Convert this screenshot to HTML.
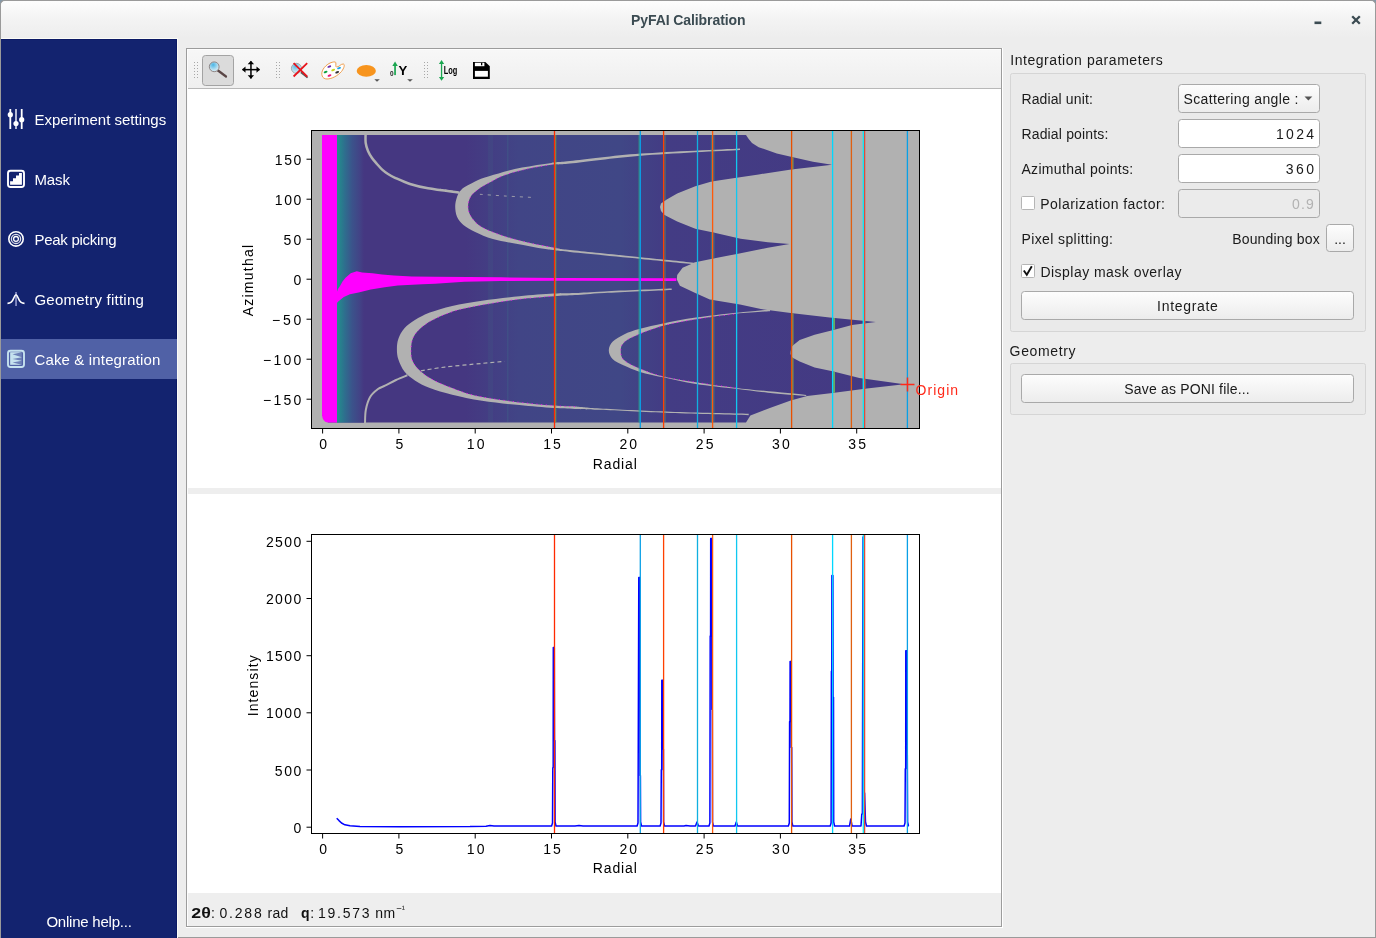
<!DOCTYPE html>
<html><head><meta charset="utf-8">
<style>
*{margin:0;padding:0}
html,body{width:1376px;height:938px;overflow:hidden;background:#8598a8}
svg{position:absolute;left:0;top:0;display:block;will-change:transform}
</style></head><body>
<svg width="1376" height="938" viewBox="0 0 1376 938">
<defs>
 <linearGradient id="titleg" x1="0" y1="0" x2="0" y2="1"><stop offset="0" stop-color="#fdfdfd"/><stop offset="0.5" stop-color="#f3f3f3"/><stop offset="1" stop-color="#ededed"/></linearGradient>
 <linearGradient id="btng" x1="0" y1="0" x2="0" y2="1"><stop offset="0" stop-color="#fdfdfd"/><stop offset="1" stop-color="#ececec"/></linearGradient>
 <linearGradient id="tbg" x1="0" y1="0" x2="0" y2="1"><stop offset="0" stop-color="#f7f7f7"/><stop offset="1" stop-color="#efefef"/></linearGradient>
</defs>
<path d="M0,938 V5 Q0,0 5,0 H1371 Q1376,0 1376,5 V938 Z" fill="#9a9a9a"/>
<path d="M1,938 V5.5 Q1,1 5.5,1 H1370.5 Q1375,1 1375,5.5 V938 Z" fill="#ededed"/>
<path d="M1,38 V5.5 Q1,1 5.5,1 H1370.5 Q1375,1 1375,5.5 V38 Z" fill="url(#titleg)"/>
<rect x="0" y="937" width="1376" height="1" fill="#9a9a9a"/>
<text x="688.3" y="24.9" font-size="14" font-family="Liberation Sans, sans-serif" font-weight="bold" fill="#3b4b52" text-anchor="middle" textLength="114.5" lengthAdjust="spacing" >PyFAI Calibration</text>
<rect x="1314.5" y="21.5" width="6.8" height="2.6" fill="#3b4b52"/>
<path d="M1352.2,16.2 L1359.8,23.8 M1359.8,16.2 L1352.2,23.8" stroke="#3b4b52" stroke-width="2.3"/>
<rect x="1" y="38" width="177" height="900" fill="#fbfbf6"/><rect x="1" y="39" width="176" height="899" fill="#0b1964"/><rect x="1" y="40" width="175" height="898" fill="#13236f"/><rect x="1" y="339" width="176" height="40" fill="#5061a6"/><text x="34.4" y="125.2" font-size="15" font-family="Liberation Sans, sans-serif" font-weight="normal" fill="#ffffff" text-anchor="start" textLength="131.8" lengthAdjust="spacing" >Experiment settings</text><text x="34.4" y="185.0" font-size="15" font-family="Liberation Sans, sans-serif" font-weight="normal" fill="#ffffff" text-anchor="start" textLength="35.6" lengthAdjust="spacing" >Mask</text><text x="34.4" y="245.2" font-size="15" font-family="Liberation Sans, sans-serif" font-weight="normal" fill="#ffffff" text-anchor="start" textLength="82.2" lengthAdjust="spacing" >Peak picking</text><text x="34.4" y="305.2" font-size="15" font-family="Liberation Sans, sans-serif" font-weight="normal" fill="#ffffff" text-anchor="start" textLength="109.4" lengthAdjust="spacing" >Geometry fitting</text><text x="34.4" y="365.0" font-size="15" font-family="Liberation Sans, sans-serif" font-weight="normal" fill="#ffffff" text-anchor="start" textLength="126" lengthAdjust="spacing" >Cake &amp; integration</text><text x="46.4" y="927.3" font-size="15" font-family="Liberation Sans, sans-serif" font-weight="normal" fill="#ffffff" text-anchor="start" textLength="85.5" lengthAdjust="spacing" >Online help...</text><g>
<rect x="9.4" y="109" width="1.8" height="20" fill="#ffffff"/><circle cx="10.3" cy="114.7" r="2.6" fill="#ffffff"/>
<rect x="15.1" y="109" width="1.8" height="20" fill="#c9cde3"/><circle cx="16" cy="123.5" r="2.6" fill="#ffffff"/>
<rect x="20.8" y="109" width="1.8" height="20" fill="#ffffff"/><circle cx="21.7" cy="119.7" r="2.6" fill="#ffffff"/>
</g>
<g>
<rect x="8" y="170.8" width="16" height="16.2" rx="2.5" fill="none" stroke="#ffffff" stroke-width="1.9"/>
<path d="M10.1,184.8 V181.2 H13 V178.3 H16 V175.6 H19 V173 H21.9 V184.8 Z" fill="#ffffff"/>
</g>
<g fill="none" stroke="#ffffff">
<circle cx="16" cy="238.9" r="7.2" stroke-width="1.6"/>
<circle cx="16" cy="238.9" r="4.6" stroke-width="1.3" opacity="0.85"/>
<circle cx="16" cy="238.9" r="2.4" stroke-width="1.3"/>
</g>
<g>
<rect x="15.1" y="292" width="1.9" height="14" fill="#8088c0"/>
<path d="M7.5,303.4 C11,303.4 12.5,301.5 13.8,298 C14.8,295.5 15.2,294.8 16,294.8 C16.8,294.8 17.2,295.5 18.2,298 C19.5,301.5 21,303.4 24.5,303.4" fill="none" stroke="#ffffff" stroke-width="1.6"/>
</g>
<g>
<rect x="8" y="350.8" width="16" height="16.2" rx="2.5" fill="none" stroke="#c6e2ef" stroke-width="1.9"/>
<path d="M10.2,352.2 H21.8 L12.5,354.2 L21.8,357.3 L12.5,359 L21.8,360.8 L12.5,362.5 L21.8,364.8 H10.2 Z" fill="#c6e2ef"/>
<rect x="10.2" y="352.2" width="11.6" height="12.6" fill="#c6e2ef" opacity="0.25"/>
</g>
<rect x="186" y="48" width="816" height="879" fill="#9c9c9c"/><rect x="187" y="49" width="814" height="877" fill="#fdfdfd"/><rect x="188" y="50" width="813" height="876" fill="#ffffff"/><rect x="188" y="50" width="813" height="38" fill="url(#tbg)"/><rect x="188" y="88" width="813" height="1" fill="#b8b8b8"/><rect x="188" y="488" width="813" height="6" fill="#eeeeee"/><rect x="188" y="893" width="813" height="33" fill="#eeeeee"/><rect x="1002" y="48" width="1" height="880" fill="#ffffff"/><rect x="186" y="927" width="817" height="1" fill="#ffffff"/>

<defs>
 <radialGradient id="lens" cx="0.4" cy="0.3" r="0.8"><stop offset="0" stop-color="#4ab6e6"/><stop offset="0.6" stop-color="#b7dff0"/><stop offset="1" stop-color="#e8f4f8"/></radialGradient>
</defs>
<rect x="194" y="62" width="1" height="1" fill="#a8a8a8"/><rect x="194" y="65" width="1" height="1" fill="#a8a8a8"/><rect x="194" y="68" width="1" height="1" fill="#a8a8a8"/><rect x="194" y="71" width="1" height="1" fill="#a8a8a8"/><rect x="194" y="74" width="1" height="1" fill="#a8a8a8"/><rect x="194" y="77" width="1" height="1" fill="#a8a8a8"/><rect x="197" y="62" width="1" height="1" fill="#a8a8a8"/><rect x="197" y="65" width="1" height="1" fill="#a8a8a8"/><rect x="197" y="68" width="1" height="1" fill="#a8a8a8"/><rect x="197" y="71" width="1" height="1" fill="#a8a8a8"/><rect x="197" y="74" width="1" height="1" fill="#a8a8a8"/><rect x="197" y="77" width="1" height="1" fill="#a8a8a8"/>
<rect x="202.5" y="55.5" width="31" height="30" rx="3" fill="#dbdbdb" stroke="#a3a3a3"/>
<line x1="218" y1="70.5" x2="226" y2="76.5" stroke="#5a4646" stroke-width="2.2" stroke-linecap="round"/>
<circle cx="214.2" cy="66.8" r="4.9" fill="url(#lens)" stroke="#8f8585" stroke-width="1"/>
<g fill="#000">
<rect x="242.5" y="68.9" width="17" height="1.5"/>
<rect x="250.2" y="61.5" width="1.5" height="17"/>
<path d="M242,69.6 L245.5,66.4 V72.8 Z M260,69.6 L256.5,66.4 V72.8 Z M250.9,60.8 L247.7,64.3 H254.1 Z M250.9,78.7 L247.7,75.2 H254.1 Z"/>
</g>
<rect x="276" y="62" width="1" height="1" fill="#a8a8a8"/><rect x="276" y="65" width="1" height="1" fill="#a8a8a8"/><rect x="276" y="68" width="1" height="1" fill="#a8a8a8"/><rect x="276" y="71" width="1" height="1" fill="#a8a8a8"/><rect x="276" y="74" width="1" height="1" fill="#a8a8a8"/><rect x="276" y="77" width="1" height="1" fill="#a8a8a8"/><rect x="279" y="62" width="1" height="1" fill="#a8a8a8"/><rect x="279" y="65" width="1" height="1" fill="#a8a8a8"/><rect x="279" y="68" width="1" height="1" fill="#a8a8a8"/><rect x="279" y="71" width="1" height="1" fill="#a8a8a8"/><rect x="279" y="74" width="1" height="1" fill="#a8a8a8"/><rect x="279" y="77" width="1" height="1" fill="#a8a8a8"/>
<line x1="300.9" y1="72.3" x2="307.6" y2="77.6" stroke="#555" stroke-width="1.8"/>
<circle cx="296.4" cy="68.3" r="5" fill="url(#lens)" stroke="#999" stroke-width="0.9" opacity="0.9"/>
<path d="M293.6,63.2 L307.3,76.6 M307.2,63.2 L293.6,76.5" stroke="#e8141c" stroke-width="1.8"/>
<g>
<path d="M322.2,76 C320.5,72 324,66 330,63 C333,61.8 335.3,61.5 335.8,62.5 C336.2,64.5 335.2,66.5 336.5,67 C338.5,67.5 341,63.5 343.5,64 C345,64.6 344.2,68 341.5,71.5 C338,75.5 332,79 327,79 C324.5,79 322.8,77.8 322.2,76 Z" fill="#fff" stroke="#f0a050" stroke-width="1"/>
<ellipse cx="329.3" cy="66.6" rx="2" ry="1" fill="#6a2aa8" transform="rotate(-20 329.3 66.6)"/>
<ellipse cx="339" cy="68.1" rx="2" ry="1" fill="#1aa8e8" transform="rotate(-20 339 68.1)"/>
<ellipse cx="333.2" cy="70" rx="2" ry="1" fill="#c8d820" transform="rotate(-20 333.2 70)"/>
<ellipse cx="325.6" cy="72" rx="2" ry="1" fill="#10a040" transform="rotate(-20 325.6 72)"/>
<ellipse cx="337.2" cy="72.3" rx="2" ry="1" fill="#333" transform="rotate(-20 337.2 72.3)"/>
<ellipse cx="329.5" cy="75.5" rx="2" ry="1" fill="#e8147a" transform="rotate(-20 329.5 75.5)"/>
</g>
<ellipse cx="366.3" cy="70.9" rx="9.6" ry="5.9" fill="#f7941d"/>
<path d="M374.3,79.3 H379.8 L377,81.8 Z" fill="#555"/>
<text x="390" y="75.5" font-size="6.5" font-weight="bold" font-family="Liberation Sans, sans-serif" fill="#222">0</text>
<rect x="394.2" y="64.5" width="1.7" height="10.6" fill="#1aa650"/>
<path d="M392.3,65.9 L395.05,61.5 L397.8,65.9 Z" fill="#1aa650"/>
<text x="398.5" y="75.1" font-size="13.2" font-weight="bold" font-family="Liberation Sans, sans-serif" fill="#000">Y</text>
<path d="M407.2,79.3 H412.8 L410,81.8 Z" fill="#555"/>
<rect x="424" y="62" width="1" height="1" fill="#a8a8a8"/><rect x="424" y="65" width="1" height="1" fill="#a8a8a8"/><rect x="424" y="68" width="1" height="1" fill="#a8a8a8"/><rect x="424" y="71" width="1" height="1" fill="#a8a8a8"/><rect x="424" y="74" width="1" height="1" fill="#a8a8a8"/><rect x="424" y="77" width="1" height="1" fill="#a8a8a8"/><rect x="427" y="62" width="1" height="1" fill="#a8a8a8"/><rect x="427" y="65" width="1" height="1" fill="#a8a8a8"/><rect x="427" y="68" width="1" height="1" fill="#a8a8a8"/><rect x="427" y="71" width="1" height="1" fill="#a8a8a8"/><rect x="427" y="74" width="1" height="1" fill="#a8a8a8"/><rect x="427" y="77" width="1" height="1" fill="#a8a8a8"/>
<rect x="440.9" y="62.5" width="1.3" height="16" fill="#1aa650"/>
<path d="M438.9,64 L441.55,60 L444.2,64 Z M438.9,76.9 L441.55,80.8 L444.2,76.9 Z" fill="#1aa650"/>
<text x="443.8" y="74.2" font-size="10.4" font-weight="bold" font-family="Liberation Sans, sans-serif" fill="#000" textLength="13.6" lengthAdjust="spacingAndGlyphs">Log</text>
<path d="M473,62 H485.3 L489.8,66.3 V79 H473 Z" fill="#000"/>
<rect x="474.9" y="62.7" width="9.5" height="3.5" fill="#fff"/>
<rect x="481" y="62.7" width="1.3" height="2.6" fill="#000"/>
<rect x="474.9" y="70.9" width="13" height="5.8" fill="#fff"/>


<defs>
 <linearGradient id="teal" x1="337" x2="364" y1="0" y2="0" gradientUnits="userSpaceOnUse">
  <stop offset="0" stop-color="#21908c"/><stop offset="0.28" stop-color="#2e6f8e"/><stop offset="0.56" stop-color="#3b538b"/><stop offset="0.84" stop-color="#424386"/><stop offset="1" stop-color="#453781"/>
 </linearGradient>
 <linearGradient id="pband" x1="322" x2="919" y1="0" y2="0" gradientUnits="userSpaceOnUse">
  <stop offset="0" stop-color="#453781"/><stop offset="0.24" stop-color="#453781"/><stop offset="0.33" stop-color="#414586"/><stop offset="0.5" stop-color="#404786"/><stop offset="0.57" stop-color="#433c84"/><stop offset="1" stop-color="#443983"/>
 </linearGradient>
 <clipPath id="cclip"><rect x="312" y="131" width="607" height="297"/></clipPath>
</defs>
<g clip-path="url(#cclip)">
<rect x="312" y="131" width="607" height="297" fill="#b1b1b1"/>
<polygon points="322.0,135.0 746.0,135.0 748.7,139.1 752.0,143.0 758.7,147.2 776.8,153.6 793.1,157.2 813.0,161.7 832.0,164.8 813.0,167.1 791.3,169.5 758.7,174.4 731.5,178.6 711.6,181.6 695.3,186.2 677.2,193.4 666.3,199.7 661.0,203.5 660.0,207.0 661.0,211.0 664.5,215.1 677.2,221.5 695.3,228.7 713.4,232.4 740.6,238.7 767.8,242.3 789.5,244.1 767.8,247.8 740.6,253.2 713.4,258.6 695.3,262.2 682.6,267.7 677.2,274.9 676.8,279.5 679.9,285.8 695.3,293.0 709.8,299.4 740.0,304.6 760.9,309.1 790.7,313.1 829.6,317.6 875.8,322.1 852.0,325.1 832.5,330.3 814.6,334.8 799.7,340.0 792.2,346.0 790.7,351.0 790.5,354.0 792.2,357.5 799.7,361.6 814.6,367.6 832.5,371.3 859.4,378.1 904.2,384.2 866.9,388.5 832.5,393.0 807.2,396.0 790.7,400.4 769.9,407.9 750.4,415.4 746.0,422.6 328.0,422.6 322.0,415.0" fill="url(#pband)" />
<rect x="337" y="135" width="27" height="287.6" fill="url(#teal)"/>
<rect x="488" y="135" width="5" height="287" fill="#3a8a8c" opacity="0.10"/>
<rect x="507" y="135" width="1.5" height="287" fill="#3a8a8c" opacity="0.18"/>
<path d="M740.00,148.40 C723.47,149.27 669.13,151.48 640.80,153.60 C612.47,155.72 584.90,159.55 570.00,161.10 C555.10,162.65 559.40,161.82 551.40,162.90 C543.40,163.98 530.80,165.85 522.00,167.60 C513.20,169.35 505.43,171.55 498.60,173.40 C491.77,175.25 485.88,176.83 481.00,178.70 C476.12,180.57 472.62,182.73 469.30,184.60 C465.98,186.47 463.15,187.85 461.10,189.90 C459.05,191.95 457.98,194.17 457.00,196.90 C456.02,199.63 455.20,202.98 455.20,206.30 C455.20,209.62 455.63,213.68 457.00,216.80 C458.37,219.92 460.37,222.45 463.40,225.00 C466.43,227.55 470.30,229.75 475.20,232.10 C480.10,234.45 485.97,237.15 492.80,239.10 C499.63,241.05 507.42,242.13 516.20,243.80 C524.98,245.47 536.53,247.73 545.50,249.10 C554.47,250.47 554.12,250.37 570.00,252.00 C585.88,253.63 619.80,256.83 640.80,258.90 C661.80,260.97 686.80,263.48 696.00,264.40 L696.00,262.80 C686.80,261.87 661.80,259.33 640.80,257.20 C619.80,255.07 583.93,251.50 570.00,250.00 C556.07,248.50 563.23,249.23 557.20,248.20 C551.17,247.17 541.62,245.50 533.80,243.80 C525.98,242.10 517.13,239.95 510.30,238.00 C503.47,236.05 498.07,234.27 492.80,232.10 C487.53,229.93 482.42,227.75 478.70,225.00 C474.98,222.25 472.27,218.72 470.50,215.60 C468.73,212.48 468.10,209.42 468.10,206.30 C468.10,203.18 468.93,199.63 470.50,196.90 C472.07,194.17 474.38,192.25 477.50,189.90 C480.62,187.55 484.70,185.25 489.20,182.80 C493.70,180.35 498.05,177.53 504.50,175.20 C510.95,172.87 520.08,170.55 527.90,168.80 C535.72,167.05 544.38,165.57 551.40,164.70 C558.42,163.83 555.10,165.10 570.00,163.60 C584.90,162.10 612.47,157.97 640.80,155.70 C669.13,153.43 723.47,150.95 740.00,150.00 Z" fill="#b1b1b1"/>
<path d="M671.70,288.60 C660.50,289.07 620.62,290.67 604.50,291.40 C588.38,292.13 583.47,292.63 575.00,293.00 C566.53,293.37 562.98,293.07 553.70,293.60 C544.42,294.13 531.25,295.02 519.30,296.20 C507.35,297.38 493.18,299.08 482.00,300.70 C470.82,302.32 460.90,303.92 452.20,305.90 C443.50,307.88 436.02,310.23 429.80,312.60 C423.58,314.97 419.13,317.48 414.90,320.10 C410.67,322.72 407.15,325.20 404.40,328.30 C401.65,331.40 399.65,335.22 398.40,338.70 C397.15,342.18 396.90,345.72 396.90,349.20 C396.90,352.68 397.15,355.87 398.40,359.60 C399.65,363.33 401.65,368.12 404.40,371.60 C407.15,375.08 410.67,377.77 414.90,380.50 C419.13,383.23 423.58,385.63 429.80,388.00 C436.02,390.37 443.50,392.58 452.20,394.70 C460.90,396.82 470.82,398.97 482.00,400.70 C493.18,402.43 507.35,403.87 519.30,405.10 C531.25,406.33 544.42,407.47 553.70,408.10 C562.98,408.73 567.28,408.62 575.00,408.90 C582.72,409.18 584.12,409.12 600.00,409.80 C615.88,410.48 645.52,412.10 670.30,413.00 C695.08,413.90 735.63,414.83 748.70,415.20 L748.70,413.80 C735.63,413.47 695.08,412.67 670.30,411.80 C645.52,410.93 615.88,409.47 600.00,408.60 C584.12,407.73 582.72,407.10 575.00,406.60 C567.28,406.10 564.22,406.47 553.70,405.60 C543.18,404.73 525.08,403.10 511.90,401.40 C498.72,399.70 484.55,397.63 474.60,395.40 C464.65,393.17 458.92,390.48 452.20,388.00 C445.48,385.52 439.53,383.23 434.30,380.50 C429.07,377.77 424.42,374.83 420.80,371.60 C417.18,368.37 414.22,364.83 412.60,361.10 C410.98,357.37 410.97,353.18 411.10,349.20 C411.23,345.22 411.53,340.93 413.40,337.20 C415.27,333.47 418.33,330.03 422.30,326.80 C426.27,323.57 430.98,320.67 437.20,317.80 C443.42,314.93 450.88,311.95 459.60,309.60 C468.32,307.25 479.55,305.43 489.50,303.70 C499.45,301.97 508.60,300.45 519.30,299.20 C530.00,297.95 544.42,296.88 553.70,296.20 C562.98,295.52 566.53,295.63 575.00,295.10 C583.47,294.57 588.38,293.85 604.50,293.00 C620.62,292.15 660.50,290.50 671.70,290.00 Z" fill="#b1b1b1"/>
<path d="M770.00,309.40 C768.32,309.57 765.58,309.83 759.90,310.40 C754.22,310.97 746.57,311.60 735.90,312.80 C725.23,314.00 707.88,315.87 695.90,317.60 C683.92,319.33 673.32,321.33 664.00,323.20 C654.68,325.07 646.67,326.93 640.00,328.80 C633.33,330.67 628.53,332.27 624.00,334.40 C619.47,336.53 615.33,338.93 612.80,341.60 C610.27,344.27 608.80,347.47 608.80,350.40 C608.80,353.33 610.27,356.68 612.80,359.20 C615.33,361.72 619.47,363.38 624.00,365.50 C628.53,367.62 633.33,369.90 640.00,371.90 C646.67,373.90 654.68,375.50 664.00,377.50 C673.32,379.50 683.92,382.03 695.90,383.90 C707.88,385.77 723.90,387.23 735.90,388.70 C747.90,390.17 756.18,391.48 767.90,392.70 C779.62,393.92 799.82,395.45 806.20,396.00 L806.20,394.90 C794.48,393.73 754.28,390.00 735.90,387.90 C717.52,385.80 707.88,384.17 695.90,382.30 C683.92,380.43 673.32,378.97 664.00,376.70 C654.68,374.43 646.67,371.48 640.00,368.70 C633.33,365.92 627.20,363.05 624.00,360.00 C620.80,356.95 620.80,353.33 620.80,350.40 C620.80,347.47 621.33,344.93 624.00,342.40 C626.67,339.87 630.13,338.00 636.80,335.20 C643.47,332.40 654.15,328.27 664.00,325.60 C673.85,322.93 683.92,321.17 695.90,319.20 C707.88,317.23 723.55,315.13 735.90,313.80 C748.25,312.47 764.32,311.63 770.00,311.20 Z" fill="#b1b1b1"/>
<path d="M365.60,133.00 C365.62,134.67 365.30,140.00 365.70,143.00 C366.10,146.00 366.95,148.50 368.00,151.00 C369.05,153.50 370.50,155.83 372.00,158.00 C373.50,160.17 375.30,162.07 377.00,164.00 C378.70,165.93 380.37,167.93 382.20,169.60 C384.03,171.27 385.87,172.63 388.00,174.00 C390.13,175.37 391.33,176.13 395.00,177.80 C398.67,179.47 404.50,182.25 410.00,184.00 C415.50,185.75 419.78,186.87 428.00,188.30 C436.22,189.73 454.08,191.88 459.30,192.60" fill="none" stroke="#b1b1b1" stroke-width="2.5"/>
<path d="M365.00,424.00 C365.13,421.67 364.97,414.47 365.80,410.00 C366.63,405.53 367.97,400.70 370.00,397.20 C372.03,393.70 375.50,390.92 378.00,389.00 C380.50,387.08 382.00,387.20 385.00,385.70 C388.00,384.20 392.27,381.73 396.00,380.00 C399.73,378.27 405.50,376.08 407.40,375.30" fill="none" stroke="#b1b1b1" stroke-width="2.0"/>
<path d="M420.80,370.80 C424.78,370.18 434.50,368.33 444.70,367.10 C454.90,365.87 472.05,364.35 482.00,363.40 C491.95,362.45 500.67,361.73 504.40,361.40" fill="none" stroke="#b1b1b1" stroke-width="1.2" stroke-dasharray="4,3"/>
<path d="M479.90,194.30 C484.08,194.58 496.02,195.47 505.00,196.00 C513.98,196.53 529.00,197.25 533.80,197.50" fill="none" stroke="#b1b1b1" stroke-width="1" stroke-dasharray="3,5" opacity="0.8"/>
<path d="M440.00,189.30 C443.22,189.78 456.08,191.72 459.30,192.20" fill="none" stroke="#b1b1b1" stroke-width="1.2" stroke-dasharray="3,2"/>
<path d="M557.20,248.20 C553.30,247.47 541.62,245.50 533.80,243.80 C525.98,242.10 517.13,239.95 510.30,238.00 C503.47,236.05 498.07,234.27 492.80,232.10 C487.53,229.93 482.42,227.75 478.70,225.00 C474.98,222.25 472.27,218.72 470.50,215.60 C468.73,212.48 468.10,209.42 468.10,206.30 C468.10,203.18 468.93,199.63 470.50,196.90 C472.07,194.17 474.38,192.25 477.50,189.90 C480.62,187.55 484.70,185.25 489.20,182.80 C493.70,180.35 498.05,177.53 504.50,175.20 C510.95,172.87 520.08,170.55 527.90,168.80 C535.72,167.05 547.48,165.38 551.40,164.70" fill="none" stroke="#ff00ff" stroke-width="0.9" stroke-dasharray="1.2,3.5" opacity="0.85"/>
<path d="M575.00,406.60 C571.45,406.43 564.22,406.47 553.70,405.60 C543.18,404.73 525.08,403.10 511.90,401.40 C498.72,399.70 484.55,397.63 474.60,395.40 C464.65,393.17 458.92,390.48 452.20,388.00 C445.48,385.52 439.53,383.23 434.30,380.50 C429.07,377.77 424.42,374.83 420.80,371.60 C417.18,368.37 414.22,364.83 412.60,361.10 C410.98,357.37 410.97,353.18 411.10,349.20 C411.23,345.22 411.53,340.93 413.40,337.20 C415.27,333.47 418.33,330.03 422.30,326.80 C426.27,323.57 430.98,320.67 437.20,317.80 C443.42,314.93 450.88,311.95 459.60,309.60 C468.32,307.25 479.55,305.43 489.50,303.70 C499.45,301.97 508.60,300.45 519.30,299.20 C530.00,297.95 547.97,296.70 553.70,296.20" fill="none" stroke="#ff00ff" stroke-width="0.9" stroke-dasharray="1.2,3.5" opacity="0.85"/>
<path d="M735.90,387.90 C729.23,386.97 707.88,384.17 695.90,382.30 C683.92,380.43 673.32,378.97 664.00,376.70 C654.68,374.43 646.67,371.48 640.00,368.70 C633.33,365.92 627.20,363.05 624.00,360.00 C620.80,356.95 620.80,353.33 620.80,350.40 C620.80,347.47 621.33,344.93 624.00,342.40 C626.67,339.87 630.13,338.00 636.80,335.20 C643.47,332.40 654.15,328.27 664.00,325.60 C673.85,322.93 683.92,321.17 695.90,319.20 C707.88,317.23 729.23,314.70 735.90,313.80" fill="none" stroke="#ff00ff" stroke-width="0.9" stroke-dasharray="1.2,3.5" opacity="0.85"/>
<path d="M322,135 H337 V422.6 H328 Q322.5,422 322,415 Z" fill="#ff00ff"/>
<polygon points="336.5,293.0 338.0,289.0 340.3,285.5 342.5,281.5 345.5,277.7 350.7,273.3 356.8,271.2 362.1,272.5 372.5,273.2 382.1,274.6 393.9,275.5 411.8,276.4 435.0,276.8 500.8,277.3 560.0,278.0 676.3,278.2 676.3,280.9 560.0,280.7 500.8,281.0 464.4,281.8 435.0,283.8 422.2,284.2 397.8,285.5 384.7,287.3 370.8,289.5 358.6,292.5 349.9,294.3 343.8,296.9 338.5,301.2 336.5,303.5" fill="#ff00ff" />
<clipPath id="pclip"><polygon points="322.0,135.0 746.0,135.0 748.7,139.1 752.0,143.0 758.7,147.2 776.8,153.6 793.1,157.2 813.0,161.7 832.0,164.8 813.0,167.1 791.3,169.5 758.7,174.4 731.5,178.6 711.6,181.6 695.3,186.2 677.2,193.4 666.3,199.7 661.0,203.5 660.0,207.0 661.0,211.0 664.5,215.1 677.2,221.5 695.3,228.7 713.4,232.4 740.6,238.7 767.8,242.3 789.5,244.1 767.8,247.8 740.6,253.2 713.4,258.6 695.3,262.2 682.6,267.7 677.2,274.9 676.8,279.5 679.9,285.8 695.3,293.0 709.8,299.4 740.0,304.6 760.9,309.1 790.7,313.1 829.6,317.6 875.8,322.1 852.0,325.1 832.5,330.3 814.6,334.8 799.7,340.0 792.2,346.0 790.7,351.0 790.5,354.0 792.2,357.5 799.7,361.6 814.6,367.6 832.5,371.3 859.4,378.1 904.2,384.2 866.9,388.5 832.5,393.0 807.2,396.0 790.7,400.4 769.9,407.9 750.4,415.4 746.0,422.6 328.0,422.6 322.0,415.0"/></clipPath>
<g clip-path="url(#pclip)">
<rect x="555.2" y="135" width="1" height="288" fill="#8ab43c" opacity="0.8"/>
<rect x="638.6" y="135" width="1.1" height="288" fill="#2eb080" opacity="0.8"/>
<rect x="664.5" y="135" width="1" height="288" fill="#5aa860" opacity="0.6"/>
<rect x="710.9" y="135" width="0.9" height="288" fill="#3a9a80" opacity="0.7"/>
<rect x="713.5" y="135" width="0.9" height="288" fill="#3a9a80" opacity="0.7"/>
<rect x="792.3" y="135" width="1.1" height="288" fill="#9ac040" opacity="0.85"/>
<rect x="833.3" y="135" width="1.5" height="288" fill="#7ad050" opacity="0.9"/>
<rect x="865.2" y="135" width="0.9" height="288" fill="#3a9a80" opacity="0.7"/>
</g>
<line x1="554.5" y1="131" x2="554.5" y2="428" stroke="#ff2a00" stroke-width="1.3"/><line x1="640.3" y1="131" x2="640.3" y2="428" stroke="#0aa0e6" stroke-width="1.3"/><line x1="663.6" y1="131" x2="663.6" y2="428" stroke="#ff4000" stroke-width="1.3"/><line x1="697.5" y1="131" x2="697.5" y2="428" stroke="#10b0e0" stroke-width="1.3"/><line x1="712.6" y1="131" x2="712.6" y2="428" stroke="#ff5a0a" stroke-width="1.3"/><line x1="736.6" y1="131" x2="736.6" y2="428" stroke="#10c8f0" stroke-width="1.3"/><line x1="791.6" y1="131" x2="791.6" y2="428" stroke="#e85000" stroke-width="1.3"/><line x1="832.6" y1="131" x2="832.6" y2="428" stroke="#00d8ff" stroke-width="1.3"/><line x1="851.4" y1="131" x2="851.4" y2="428" stroke="#e06010" stroke-width="1.3"/><line x1="863.3" y1="131" x2="863.3" y2="428" stroke="#00f0ff" stroke-width="1.3"/><line x1="864.6" y1="131" x2="864.6" y2="428" stroke="#e04a3a" stroke-width="1.3"/><line x1="907.4" y1="131" x2="907.4" y2="428" stroke="#0aa0e6" stroke-width="1.3"/>
</g>
<rect x="311" y="130" width="609" height="1" fill="#000"/>
<rect x="311" y="428" width="609" height="1" fill="#000"/>
<rect x="311" y="130" width="1" height="299" fill="#000"/>
<rect x="919" y="130" width="1" height="299" fill="#000"/>
<path d="M900.5,384.5 H914.5 M907.5,377.5 V391.5" stroke="#ff2a1a" stroke-width="1.5"/>
<text x="915.6" y="394.7" font-size="14" font-family="Liberation Sans, sans-serif" fill="#ff2a1a" textLength="42.5" lengthAdjust="spacing">Origin</text>
<rect x="306.5" y="158.7" width="4.5" height="1" fill="#000"/><text x="301.3" y="164.7" text-anchor="end" font-size="14" font-family="Liberation Sans, sans-serif" fill="#000" textLength="26.5" lengthAdjust="spacing">150</text><rect x="306.5" y="198.7" width="4.5" height="1" fill="#000"/><text x="301.3" y="204.7" text-anchor="end" font-size="14" font-family="Liberation Sans, sans-serif" fill="#000" textLength="26.5" lengthAdjust="spacing">100</text><rect x="306.5" y="238.7" width="4.5" height="1" fill="#000"/><text x="301.3" y="244.7" text-anchor="end" font-size="14" font-family="Liberation Sans, sans-serif" fill="#000" textLength="17.7" lengthAdjust="spacing">50</text><rect x="306.5" y="278.7" width="4.5" height="1" fill="#000"/><text x="301.3" y="284.7" text-anchor="end" font-size="14" font-family="Liberation Sans, sans-serif" fill="#000" textLength="8.8" lengthAdjust="spacing">0</text><rect x="306.5" y="318.7" width="4.5" height="1" fill="#000"/><text x="301.3" y="324.7" text-anchor="end" font-size="14" font-family="Liberation Sans, sans-serif" fill="#000" textLength="29.3" lengthAdjust="spacing">−50</text><rect x="306.5" y="358.7" width="4.5" height="1" fill="#000"/><text x="301.3" y="364.7" text-anchor="end" font-size="14" font-family="Liberation Sans, sans-serif" fill="#000" textLength="38.2" lengthAdjust="spacing">−100</text><rect x="306.5" y="398.7" width="4.5" height="1" fill="#000"/><text x="301.3" y="404.7" text-anchor="end" font-size="14" font-family="Liberation Sans, sans-serif" fill="#000" textLength="38.2" lengthAdjust="spacing">−150</text><rect x="322.1" y="429" width="1" height="4.5" fill="#000"/><text x="323.1" y="449.2" text-anchor="middle" font-size="14" font-family="Liberation Sans, sans-serif" fill="#000" textLength="8.8" lengthAdjust="spacing">0</text><rect x="398.4" y="429" width="1" height="4.5" fill="#000"/><text x="399.4" y="449.2" text-anchor="middle" font-size="14" font-family="Liberation Sans, sans-serif" fill="#000" textLength="8.8" lengthAdjust="spacing">5</text><rect x="474.7" y="429" width="1" height="4.5" fill="#000"/><text x="475.7" y="449.2" text-anchor="middle" font-size="14" font-family="Liberation Sans, sans-serif" fill="#000" textLength="17.7" lengthAdjust="spacing">10</text><rect x="551.0" y="429" width="1" height="4.5" fill="#000"/><text x="552.0" y="449.2" text-anchor="middle" font-size="14" font-family="Liberation Sans, sans-serif" fill="#000" textLength="17.7" lengthAdjust="spacing">15</text><rect x="627.3" y="429" width="1" height="4.5" fill="#000"/><text x="628.3" y="449.2" text-anchor="middle" font-size="14" font-family="Liberation Sans, sans-serif" fill="#000" textLength="17.7" lengthAdjust="spacing">20</text><rect x="703.6" y="429" width="1" height="4.5" fill="#000"/><text x="704.6" y="449.2" text-anchor="middle" font-size="14" font-family="Liberation Sans, sans-serif" fill="#000" textLength="17.7" lengthAdjust="spacing">25</text><rect x="779.9" y="429" width="1" height="4.5" fill="#000"/><text x="780.9" y="449.2" text-anchor="middle" font-size="14" font-family="Liberation Sans, sans-serif" fill="#000" textLength="17.7" lengthAdjust="spacing">30</text><rect x="856.2" y="429" width="1" height="4.5" fill="#000"/><text x="857.2" y="449.2" text-anchor="middle" font-size="14" font-family="Liberation Sans, sans-serif" fill="#000" textLength="17.7" lengthAdjust="spacing">35</text><text x="614.8" y="469.1" text-anchor="middle" font-size="14" textLength="44" lengthAdjust="spacing" font-family="Liberation Sans, sans-serif" fill="#000">Radial</text><text transform="translate(253,280.6) rotate(-90)" x="0" y="0" text-anchor="middle" font-size="14" textLength="71.5" lengthAdjust="spacing" font-family="Liberation Sans, sans-serif" fill="#000">Azimuthal</text>


<defs><clipPath id="iclip"><rect x="312" y="535" width="607" height="298"/></clipPath></defs>
<g clip-path="url(#iclip)">
<polyline points="336.7,818.2 339.0,820.6 341.5,823.0 344.9,824.8 350.0,825.8 360.0,826.5 400.0,826.8 470.0,826.6 486.0,826.2 490.0,825.6 494.0,826.0 520.0,826.0 551.6,826.0 552.5,823.0 552.8,767.7 553.2,767.7 553.3,647.5 554.3,647.5 554.5,740.4 554.9,740.4 555.1,822.0 556.0,826.0 575.0,826.0 579.0,825.6 583.0,826.0 637.1,826.0 638.0,823.0 638.8,577.6 639.8,577.6 640.0,775.5 640.4,775.5 640.6,822.0 641.5,826.0 660.1,826.0 661.0,823.0 661.3,769.7 661.7,769.7 661.8,680.2 662.8,680.2 663.0,749.0 663.4,749.0 663.6,822.0 664.5,826.0 684.0,826.0 686.0,825.5 690.0,826.0 695.5,826.0 697.0,822.0 698.5,826.0 709.0,826.0 709.9,823.0 710.2,636.0 710.6,636.0 710.7,538.5 711.7,538.5 711.9,709.6 712.3,709.6 712.5,822.0 713.4,826.0 735.0,826.0 736.3,822.0 737.6,826.0 788.4,826.0 789.3,823.0 789.6,721.6 790.0,721.6 790.1,661.5 791.1,661.5 791.3,747.6 791.7,747.6 791.9,822.0 792.8,826.0 830.2,826.0 831.1,823.0 831.4,671.3 831.8,671.3 831.9,575.5 832.9,575.5 833.1,697.3 833.5,697.3 833.7,822.0 834.6,826.0 849.5,826.0 850.8,819.0 852.1,826.0 861.0,826.0 861.8,814.0 862.4,814.0 863.0,537.0 863.8,537.0 864.2,793.0 864.6,793.0 865.5,822.0 866.5,826.0 904.1,826.0 905.0,823.0 905.3,768.7 905.7,768.7 905.8,650.8 906.8,650.8 907.6,822.0 908.5,826.0 908.6,826.0" fill="none" stroke="#0000ff" stroke-width="1.5" stroke-linejoin="round"/>
<line x1="554.5" y1="535" x2="554.5" y2="833" stroke="#ff2a00" stroke-width="1.3"/><line x1="640.3" y1="535" x2="640.3" y2="833" stroke="#0aa0e6" stroke-width="1.3"/><line x1="663.6" y1="535" x2="663.6" y2="833" stroke="#ff4000" stroke-width="1.3"/><line x1="697.5" y1="535" x2="697.5" y2="833" stroke="#10b0e0" stroke-width="1.3"/><line x1="712.6" y1="535" x2="712.6" y2="833" stroke="#ff5a0a" stroke-width="1.3"/><line x1="736.6" y1="535" x2="736.6" y2="833" stroke="#10c8f0" stroke-width="1.3"/><line x1="791.6" y1="535" x2="791.6" y2="833" stroke="#e85000" stroke-width="1.3"/><line x1="832.6" y1="535" x2="832.6" y2="833" stroke="#00d8ff" stroke-width="1.3"/><line x1="851.4" y1="535" x2="851.4" y2="833" stroke="#e06010" stroke-width="1.3"/><line x1="863.3" y1="535" x2="863.3" y2="833" stroke="#00f0ff" stroke-width="1.3"/><line x1="864.6" y1="535" x2="864.6" y2="833" stroke="#e04a3a" stroke-width="1.3"/><line x1="907.4" y1="535" x2="907.4" y2="833" stroke="#0aa0e6" stroke-width="1.3"/>
</g>
<rect x="311" y="534" width="609" height="1" fill="#000"/>
<rect x="311" y="833" width="609" height="1" fill="#000"/>
<rect x="311" y="534" width="1" height="300" fill="#000"/>
<rect x="919" y="534" width="1" height="300" fill="#000"/>
<rect x="306.5" y="826.7" width="4.5" height="1" fill="#000"/><text x="301.3" y="832.7" text-anchor="end" font-size="14" font-family="Liberation Sans, sans-serif" fill="#000" textLength="8.8" lengthAdjust="spacing">0</text><rect x="306.5" y="769.5" width="4.5" height="1" fill="#000"/><text x="301.3" y="775.5" text-anchor="end" font-size="14" font-family="Liberation Sans, sans-serif" fill="#000" textLength="26.5" lengthAdjust="spacing">500</text><rect x="306.5" y="712.3" width="4.5" height="1" fill="#000"/><text x="301.3" y="718.3" text-anchor="end" font-size="14" font-family="Liberation Sans, sans-serif" fill="#000" textLength="35.4" lengthAdjust="spacing">1000</text><rect x="306.5" y="655.2" width="4.5" height="1" fill="#000"/><text x="301.3" y="661.2" text-anchor="end" font-size="14" font-family="Liberation Sans, sans-serif" fill="#000" textLength="35.4" lengthAdjust="spacing">1500</text><rect x="306.5" y="598.0" width="4.5" height="1" fill="#000"/><text x="301.3" y="604.0" text-anchor="end" font-size="14" font-family="Liberation Sans, sans-serif" fill="#000" textLength="35.4" lengthAdjust="spacing">2000</text><rect x="306.5" y="540.8" width="4.5" height="1" fill="#000"/><text x="301.3" y="546.8" text-anchor="end" font-size="14" font-family="Liberation Sans, sans-serif" fill="#000" textLength="35.4" lengthAdjust="spacing">2500</text><rect x="322.1" y="834" width="1" height="4.5" fill="#000"/><text x="323.1" y="854.2" text-anchor="middle" font-size="14" font-family="Liberation Sans, sans-serif" fill="#000" textLength="8.8" lengthAdjust="spacing">0</text><rect x="398.4" y="834" width="1" height="4.5" fill="#000"/><text x="399.4" y="854.2" text-anchor="middle" font-size="14" font-family="Liberation Sans, sans-serif" fill="#000" textLength="8.8" lengthAdjust="spacing">5</text><rect x="474.7" y="834" width="1" height="4.5" fill="#000"/><text x="475.7" y="854.2" text-anchor="middle" font-size="14" font-family="Liberation Sans, sans-serif" fill="#000" textLength="17.7" lengthAdjust="spacing">10</text><rect x="551.0" y="834" width="1" height="4.5" fill="#000"/><text x="552.0" y="854.2" text-anchor="middle" font-size="14" font-family="Liberation Sans, sans-serif" fill="#000" textLength="17.7" lengthAdjust="spacing">15</text><rect x="627.3" y="834" width="1" height="4.5" fill="#000"/><text x="628.3" y="854.2" text-anchor="middle" font-size="14" font-family="Liberation Sans, sans-serif" fill="#000" textLength="17.7" lengthAdjust="spacing">20</text><rect x="703.6" y="834" width="1" height="4.5" fill="#000"/><text x="704.6" y="854.2" text-anchor="middle" font-size="14" font-family="Liberation Sans, sans-serif" fill="#000" textLength="17.7" lengthAdjust="spacing">25</text><rect x="779.9" y="834" width="1" height="4.5" fill="#000"/><text x="780.9" y="854.2" text-anchor="middle" font-size="14" font-family="Liberation Sans, sans-serif" fill="#000" textLength="17.7" lengthAdjust="spacing">30</text><rect x="856.2" y="834" width="1" height="4.5" fill="#000"/><text x="857.2" y="854.2" text-anchor="middle" font-size="14" font-family="Liberation Sans, sans-serif" fill="#000" textLength="17.7" lengthAdjust="spacing">35</text><text x="614.8" y="872.9" text-anchor="middle" font-size="14" textLength="44" lengthAdjust="spacing" font-family="Liberation Sans, sans-serif" fill="#000">Radial</text><text transform="translate(258.4,685.8) rotate(-90)" x="0" y="0" text-anchor="middle" font-size="14" textLength="61" lengthAdjust="spacing" font-family="Liberation Sans, sans-serif" fill="#000">Intensity</text>

<text x="191.3" y="917.5" font-size="14" font-family="Liberation Sans, sans-serif" font-weight="bold" fill="#111" text-anchor="start" textLength="19.5" lengthAdjust="spacingAndGlyphs">2θ</text><text x="211" y="917.5" font-size="14" font-family="Liberation Sans, sans-serif" font-weight="normal" fill="#111" text-anchor="start" >:</text><text x="219.4" y="917.5" font-size="14" font-family="Liberation Sans, sans-serif" font-weight="normal" fill="#111" text-anchor="start" textLength="42.3" lengthAdjust="spacing" >0.288</text><text x="267.4" y="917.5" font-size="14" font-family="Liberation Sans, sans-serif" font-weight="normal" fill="#111" text-anchor="start" textLength="21" lengthAdjust="spacing" >rad</text><text x="301" y="917.5" font-size="14" font-family="Liberation Sans, sans-serif" font-weight="bold" fill="#111" text-anchor="start" >q</text><text x="310.3" y="917.5" font-size="14" font-family="Liberation Sans, sans-serif" font-weight="normal" fill="#111" text-anchor="start" >:</text><text x="318" y="917.5" font-size="14" font-family="Liberation Sans, sans-serif" font-weight="normal" fill="#111" text-anchor="start" textLength="51.5" lengthAdjust="spacing" >19.573</text><text x="375.2" y="917.5" font-size="14" font-family="Liberation Sans, sans-serif" font-weight="normal" fill="#111" text-anchor="start" textLength="20" lengthAdjust="spacing" >nm</text><text x="396.3" y="912" font-size="9.5" font-family="Liberation Sans, sans-serif" font-weight="normal" fill="#111" text-anchor="start" >−¹</text>
<text x="1010.2" y="65.1" font-size="14" font-family="Liberation Sans, sans-serif" font-weight="normal" fill="#1a1a1a" text-anchor="start" textLength="152.5" lengthAdjust="spacing" >Integration parameters</text><rect x="1010.5" y="73.5" width="355" height="258" rx="2" fill="#eaeaea" stroke="#d5d5d5"/><text x="1021.4" y="104" font-size="14" font-family="Liberation Sans, sans-serif" font-weight="normal" fill="#1a1a1a" text-anchor="start" textLength="71.4" lengthAdjust="spacing" >Radial unit:</text><rect x="1178.5" y="84.5" width="141" height="28" rx="3" fill="url(#btng)" stroke="#a9a9a9"/><text x="1183.5" y="104" font-size="14" font-family="Liberation Sans, sans-serif" font-weight="normal" fill="#1a1a1a" text-anchor="start" textLength="115" lengthAdjust="spacing" >Scattering angle :</text><path d="M1304.5,96.5 H1312.3 L1308.4,100.5 Z" fill="#555"/><text x="1021.4" y="138.8" font-size="14" font-family="Liberation Sans, sans-serif" font-weight="normal" fill="#1a1a1a" text-anchor="start" textLength="87" lengthAdjust="spacing" >Radial points:</text><rect x="1178.5" y="119.5" width="141" height="28" rx="3" fill="#fff" stroke="#a9a9a9"/><text x="1314" y="139" font-size="14" font-family="Liberation Sans, sans-serif" font-weight="normal" fill="#1a1a1a" text-anchor="end" textLength="38" lengthAdjust="spacing" >1024</text><text x="1021.4" y="174.1" font-size="14" font-family="Liberation Sans, sans-serif" font-weight="normal" fill="#1a1a1a" text-anchor="start" textLength="111.8" lengthAdjust="spacing" >Azimuthal points:</text><rect x="1178.5" y="154.5" width="141" height="28" rx="3" fill="#fff" stroke="#a9a9a9"/><text x="1314" y="173.8" font-size="14" font-family="Liberation Sans, sans-serif" font-weight="normal" fill="#1a1a1a" text-anchor="end" textLength="28.3" lengthAdjust="spacing" >360</text><rect x="1021.5" y="196.5" width="13" height="13" rx="1" fill="#fff" stroke="#b5b5b5"/><text x="1040.3" y="209.1" font-size="14" font-family="Liberation Sans, sans-serif" font-weight="normal" fill="#1a1a1a" text-anchor="start" textLength="124.6" lengthAdjust="spacing" >Polarization factor:</text><rect x="1178.5" y="189.5" width="141" height="28" rx="3" fill="#ebebeb" stroke="#a9a9a9"/><text x="1313.8" y="208.8" font-size="14" font-family="Liberation Sans, sans-serif" font-weight="normal" fill="#b2b2b2" text-anchor="end" textLength="21.8" lengthAdjust="spacing" >0.9</text><text x="1021.4" y="244" font-size="14" font-family="Liberation Sans, sans-serif" font-weight="normal" fill="#1a1a1a" text-anchor="start" textLength="91.6" lengthAdjust="spacing" >Pixel splitting:</text><text x="1232.2" y="243.8" font-size="14" font-family="Liberation Sans, sans-serif" font-weight="normal" fill="#1a1a1a" text-anchor="start" textLength="87.5" lengthAdjust="spacing" >Bounding box</text><rect x="1326.5" y="224.5" width="27" height="27" rx="3" fill="url(#btng)" stroke="#a9a9a9"/><text x="1340" y="243.5" font-size="14" font-family="Liberation Sans, sans-serif" font-weight="normal" fill="#1a1a1a" text-anchor="middle" >...</text><rect x="1021.5" y="264.5" width="13" height="13" rx="1" fill="#fff" stroke="#b5b5b5"/><path d="M1023.8,270.5 L1026.8,274.8 L1031.8,266.3" fill="none" stroke="#111" stroke-width="1.9"/><text x="1040.4" y="276.8" font-size="14" font-family="Liberation Sans, sans-serif" font-weight="normal" fill="#1a1a1a" text-anchor="start" textLength="141.2" lengthAdjust="spacing" >Display mask overlay</text><rect x="1021.5" y="291.5" width="332" height="28" rx="3" fill="url(#btng)" stroke="#a9a9a9"/><text x="1157.1" y="310.8" font-size="14" font-family="Liberation Sans, sans-serif" font-weight="normal" fill="#1a1a1a" text-anchor="start" textLength="60.8" lengthAdjust="spacing" >Integrate</text><text x="1009.6" y="355.5" font-size="14" font-family="Liberation Sans, sans-serif" font-weight="normal" fill="#1a1a1a" text-anchor="start" textLength="66" lengthAdjust="spacing" >Geometry</text><rect x="1010.5" y="363.5" width="355" height="51" rx="2" fill="#eaeaea" stroke="#d5d5d5"/><rect x="1021.5" y="374.5" width="332" height="28" rx="3" fill="url(#btng)" stroke="#a9a9a9"/><text x="1124.3" y="394.3" font-size="14" font-family="Liberation Sans, sans-serif" font-weight="normal" fill="#1a1a1a" text-anchor="start" textLength="125.4" lengthAdjust="spacing" >Save as PONI file...</text>
</svg>
</body></html>
